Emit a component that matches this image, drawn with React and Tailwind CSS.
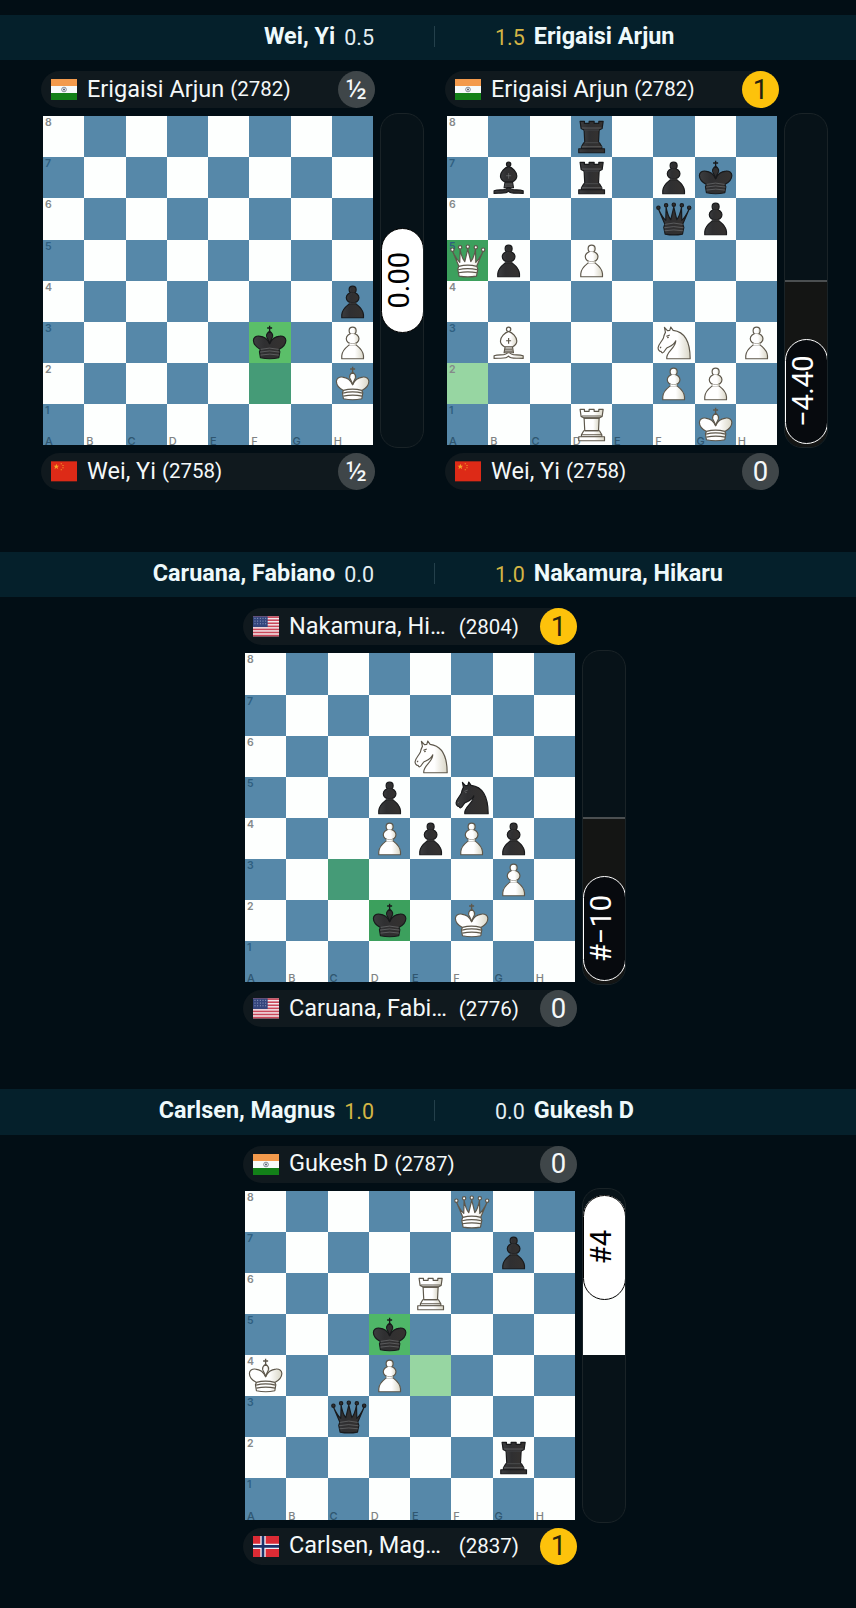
// src/App.jsx
import React from 'react';
import clsx from 'clsx';

const FILES = ['A', 'B', 'C', 'D', 'E', 'F', 'G', 'H'];

// Expands one FEN position into 8 rows of 8 (null = empty square)
const parseFen = (fen) =>
    fen.split('/').map((row) =>
        row.split('').flatMap((ch) => (/\d/.test(ch) ? Array(Number(ch)).fill(null) : [ch]))
    );

const MATCHES = [
    {
        left: { name: 'Wei, Yi', score: '0.5' },
        right: { name: 'Erigaisi Arjun', score: '1.5', leading: true },
        games: [
            {
                top: { flag: 'in', name: 'Erigaisi Arjun', rating: 2782, result: '½' },
                bottom: { flag: 'cn', name: 'Wei, Yi', rating: 2758, result: '½' },
                fen: '8/8/8/8/7p/5k1P/7K/8',
                marks: { f3: 'bg-[#5bbf69]', f2: 'bg-[#459b77]' },
                evaluation: '0.00',
            },
            {
                top: { flag: 'in', name: 'Erigaisi Arjun', rating: 2782, result: '1' },
                bottom: { flag: 'cn', name: 'Wei, Yi', rating: 2758, result: '0' },
                fen: '3r4/1b1r1pk1/5qp1/Qp1P4/8/1B3N1P/5PP1/3R2K1',
                marks: { a5: 'bg-[#3ca05d]', a2: 'bg-[#97d6a2]' },
                evaluation: '−4.40',
            },
        ],
    },
    {
        left: { name: 'Caruana, Fabiano', score: '0.0' },
        right: { name: 'Nakamura, Hikaru', score: '1.0', leading: true },
        games: [
            {
                top: { flag: 'us', name: 'Nakamura, Hi…', rating: 2804, result: '1', cut: true },
                bottom: { flag: 'us', name: 'Caruana, Fabi…', rating: 2776, result: '0', cut: true },
                fen: '8/8/4N3/3p1n2/3PpPp1/6P1/3k1K2/8',
                marks: { d2: 'bg-[#3ca05d]', c3: 'bg-[#459b77]' },
                evaluation: '#−10',
            },
        ],
    },
    {
        left: { name: 'Carlsen, Magnus', score: '1.0', leading: true },
        right: { name: 'Gukesh D', score: '0.0' },
        games: [
            {
                top: { flag: 'in', name: 'Gukesh D', rating: 2787, result: '0' },
                bottom: { flag: 'no', name: 'Carlsen, Mag…', rating: 2837, result: '1', cut: true },
                fen: '5Q2/6p1/4R3/3k4/K2P4/2q5/6r1/8',
                marks: { d5: 'bg-[#4fb768]', e4: 'bg-[#97d6a2]' },
                evaluation: '#4',
            },
        ],
    },
];

const Flag = ({ code }) => (
    <svg viewBox="0 0 78 63" className="h-[21px] w-[26px] shrink-0" preserveAspectRatio="none">
        {code === 'in' && (
            <>
                <rect width="78" height="63" fill="#f6fafb" />
                <rect width="78" height="21" fill="#f39a4c" />
                <rect y="42" width="78" height="21" fill="#128018" />
                <circle cx="39" cy="31.5" r="7" fill="none" stroke="#4c5568" strokeWidth="2" />
                <circle cx="39" cy="31.5" r="3" fill="#4c5568" />
            </>
        )}
        {code === 'cn' && (
            <>
                <rect y="1" width="78" height="60" fill="#dd2a17" />
                <path d="M16 8l2.200 6h6.300l-5 4 2 6.500-5.500-4-5.500 4 2-6.500-5-4h6.300z" fill="#f5a52a" />
                <path d="M29 7h4v3h-4zM34 12h4v3h-4zM34 19h4v3h-4zM29 25h4v3h-4z" fill="#ee8a25" />
            </>
        )}
        {code === 'us' && (
            <>
                <rect y="1" width="78" height="60" fill="#f3e9ec" />
                {[0, 1, 2, 3, 4, 5, 6].map((i) => (
                    <rect key={i} y={1 + i * 9.200} width="78" height="4.800" fill="#c9475a" />
                ))}
                <rect y="1" width="44" height="32" fill="#34457c" />
                {[7, 15, 23].map((y) =>
                    [6, 14, 22, 30, 38].map((x) => <circle key={`${x}-${y}`} cx={x} cy={y} r="1.600" fill="#a9b4d6" />)
                )}
            </>
        )}
        {code === 'no' && (
            <>
                <rect width="78" height="63" fill="#dc2b35" />
                <path d="M22 0h16v63H22zM0 23h78v16H0z" fill="#eef2fa" />
                <path d="M26 0h8v63h-8zM0 27h78v8H0z" fill="#1c3168" />
            </>
        )}
    </svg>
);

// Silhouettes on a 123 x 123 square
const SHAPES = {
    p: (
        <>
            <path d="M29 110v-9C30 84 42 76 52 68h19c10 8 22 16 23 33v9z" />
            <ellipse cx="61.500" cy="50" rx="19" ry="16" />
            <path d="M52 63q9 4 19 0v6H52z" stroke="none" />
            <circle cx="61.500" cy="26" r="10.500" />
            <path d="M55 35h13v5H55z" stroke="none" />
        </>
    ),
    r: (
        <>
            <path d="M27 16h13v6h14v-6h15v6h14v-6h13l-3 21-9 5H39l-9-5z" />
            <path d="M39 42h45l-2 38H41z" />
            <path d="M38 80h47l7 12v6H31v-6z" />
            <path d="M23 98h77v12H23z" />
        </>
    ),
    b: (
        <>
            <path d="M59 90c-3 12-24 6-41 11v8c18-2 38 3 43-7 5 10 26 5 44 7v-8c-18-5-38 1-41-11z" />
            <path d="M51 74h22l3 18H48z" />
            <path d="M61.500 28C50 32 37 45 37 57c0 8 5 13 12 17h25c7-4 12-9 12-17 0-12-13-25-24.500-29z" />
            <circle cx="61.500" cy="22" r="6.500" />
        </>
    ),
    n: (
        <path d="M34 16l9 10 7-1 3-10 7 10c33 4 51 33 51 85H41c-3-22 26-30 27-54-4 12-18 17-26 21-5 3-7 13-13 15-3 1-5-4-5-4-5 1-9-5-9-11 1-11 11-18 16-29 1-8 4-13 6-17z" />
    ),
    q: (
        <>
            <path d="M35 78L17 35Q28 58 38 67L39 28Q44 54 53 65L62 27 71 65Q80 54 85 28L86 67Q96 58 107 35L89 78 92 88 88 108q-26 5-52 0l-4-20z" />
            <circle cx="16" cy="29" r="5" />
            <circle cx="39" cy="22" r="5" />
            <circle cx="62" cy="20" r="5" />
            <circle cx="86" cy="22" r="5" />
            <circle cx="108" cy="29" r="5" />
        </>
    ),
    k: (
        <>
            <path d="M61.500 11v18M54 18h15" fill="none" strokeWidth="4" />
            <path d="M34 82C21 75 13 66 13 55c0-9 8-14 18-13 15 1 25 10 30.500 23 5.500-13 15.500-22 30.500-23 10-1 18 4 18 13 0 11-8 20-21 27l3 7-3 18q-27 6-55 0l-3-18z" />
            <path d="M61.500 28c-6 4-10 9-9 15 2 7 7 13 9 22 2-9 7-15 9-22 1-6-3-11-9-15z" />
        </>
    ),
};

// Inner lines drawn over the silhouette
const DETAILS = {
    r: 'M32 36h59M39 42h45M41 80h41M31 92h61',
    b: 'M61.500 48v17M54 56h15M50 81h23M49 87h25',
    n: 'M40 43l10-4M24 74l-3 4M42 47l5-1',
    q: 'M35 79q27-8 54 0M33 89q28-7 58 0M34 98q28-5 56 0',
    k: 'M34 82q27-8 55 0M33 90q28-7 58 0M34 99q28-6 56 0',
};

const Piece = ({ code }) => {
    const type = code.toLowerCase();
    const white = code !== type;
    return (
        <svg viewBox="0 0 123 123" className="absolute inset-0 h-full w-full">
            <g fill={white ? 'url(#ivory)' : 'url(#ebony)'} stroke={white ? '#5d574b' : '#18191b'} strokeWidth="3.500" strokeLinejoin="round">
                {SHAPES[type]}
            </g>
            {DETAILS[type] && (
                <path d={DETAILS[type]} fill="none" stroke={white ? '#5d574b' : '#77787a'} strokeWidth={white ? 3.5 : 1.8} />
            )}
        </svg>
    );
};

const Board = ({ fen, marks }) => (
    <div className="mx-auto grid h-[329px] w-[330px] grid-cols-8 grid-rows-8">
        {parseFen(fen).map((row, r) =>
            row.map((piece, c) => {
                const dark = (r + c) % 2 === 1;
                const square = `${FILES[c].toLowerCase()}${8 - r}`;
                return (
                    <div key={square} className={clsx('relative', marks[square] || (dark ? 'bg-[#5688a9]' : 'bg-[#fdfffe]'))}>
                        {c === 0 && (
                            <span className={clsx('absolute left-[2px] top-[1px] text-[10.500px] font-semibold leading-[12px]', dark ? 'text-[#2f5f80]' : 'text-[#85898a]')}>
                                {8 - r}
                            </span>
                        )}
                        {r === 7 && (
                            <span className={clsx('absolute -bottom-[2px] left-[2px] text-[11px] font-medium leading-[12px]', dark ? 'text-[#2f5670]' : 'text-[#7f8384]')}>
                                {FILES[c]}
                            </span>
                        )}
                        {piece && <Piece code={piece} />}
                    </div>
                );
            })
        )}
    </div>
);

const PlayerBar = ({ player }) => (
    <div className="flex h-[37px] items-center rounded-full bg-[#10191e] pl-[10px] font-[Roboto,sans-serif] text-[#f4f8f9]">
        <Flag code={player.flag} />
        <span className="ml-[10px] whitespace-nowrap text-[23.500px] leading-none">{player.name}</span>
        <span className={clsx('whitespace-nowrap text-[20.500px] leading-none', player.cut ? 'ml-auto mr-[21px]' : 'ml-[6px]')}>
            ({player.rating})
        </span>
        <span
            className={clsx(
                'flex size-[37px] shrink-0 items-center justify-center rounded-full text-[27.500px] leading-none',
                player.result === '1' ? 'bg-[#fdc20b] text-[#26210f]' : 'bg-[#3f4649]',
                !player.cut && 'ml-auto'
            )}
        >
            {player.result}
        </span>
    </div>
);

const PILL = 'flex h-[105px] w-[43px] shrink-0 items-center justify-center rounded-full border pr-[5px] text-[29px] leading-none';

const EvalBar = ({ evaluation }) => {
    const equal = evaluation === '0.00';
    const black = evaluation.includes('−');
    return (
        <div className="ml-[5px] mt-[42px] flex h-[335px] w-[44px] flex-col overflow-hidden rounded-[18px] border border-[#1a2327] bg-[#071218]">
            <div
                className={clsx(
                    '-mx-[0.500px] flex flex-1 flex-col items-center',
                    equal && 'justify-center',
                    black && 'mt-[166px] justify-end border-t-2 border-[#4b4f51] bg-[#141514] pb-[3px]',
                    !equal && !black && 'mb-[167px] mt-[6px] rounded-t-[22px] bg-[#fdfffe]'
                )}
            >
                <div className={clsx(PILL, black ? 'border-white bg-[#070a0e] text-white' : 'border-black bg-white text-black')}>
                    <span className={clsx('rotate-180 font-[Roboto,sans-serif] [writing-mode:vertical-rl]', evaluation === '−4.40' && 'tracking-[-0.500px]')}>
                        {evaluation}
                    </span>
                </div>
            </div>
        </div>
    );
};

const Game = ({ game }) => (
    <div className="flex">
        <div className="flex w-[334px] flex-col gap-2">
            <PlayerBar player={game.top} />
            <Board fen={game.fen} marks={game.marks} />
            <PlayerBar player={game.bottom} />
        </div>
        <EvalBar evaluation={game.evaluation} />
    </div>
);

const Score = ({ side }) => (
    <span className={clsx('relative top-px text-[21.500px] font-normal', side.leading ? 'text-[#d3b545]' : 'text-[#e3eef2]')}>{side.score}</span>
);

const Match = ({ match }) => (
    <section className="h-[537.200px]">
        <header className="flex h-[45.200px] items-center bg-[#05202b] pb-[2px] pl-[13px] font-[Roboto,sans-serif] text-[23.400px] font-bold leading-none text-[#eef9fb]">
            <div className="flex flex-1 items-baseline justify-end gap-[9px] pr-[60px]">
                <span>{match.left.name}</span>
                <Score side={match.left} />
            </div>
            <div className="h-[21px] w-px bg-[#24404b]" />
            <div className="flex flex-1 items-baseline gap-[9px] pl-[60px]">
                <Score side={match.right} />
                <span>{match.right.name}</span>
            </div>
        </header>
        <div className="mt-[11px] flex justify-center gap-[21px] pl-[13px]">
            {match.games.map((game, i) => (
                <Game key={i} game={game} />
            ))}
        </div>
    </section>
);

const App = () => (
    <div className="h-[1608px] w-[856px] overflow-hidden bg-[#020e15] pt-[15px] font-[Inter,sans-serif]">
        <svg className="absolute size-0">
            <defs>
                <linearGradient id="ivory">
                    <stop offset="0.6" stopColor="#ffffff" />
                    <stop offset="1" stopColor="#d9d6c6" />
                </linearGradient>
                <linearGradient id="ebony">
                    <stop offset="0" stopColor="#3c3d3f" />
                    <stop offset="0.35" stopColor="#2f2f31" />
                    <stop offset="1" stopColor="#353230" />
                </linearGradient>
            </defs>
        </svg>
        {MATCHES.map((match) => (
            <Match key={match.left.name} match={match} />
        ))}
    </div>
);

export default App;
